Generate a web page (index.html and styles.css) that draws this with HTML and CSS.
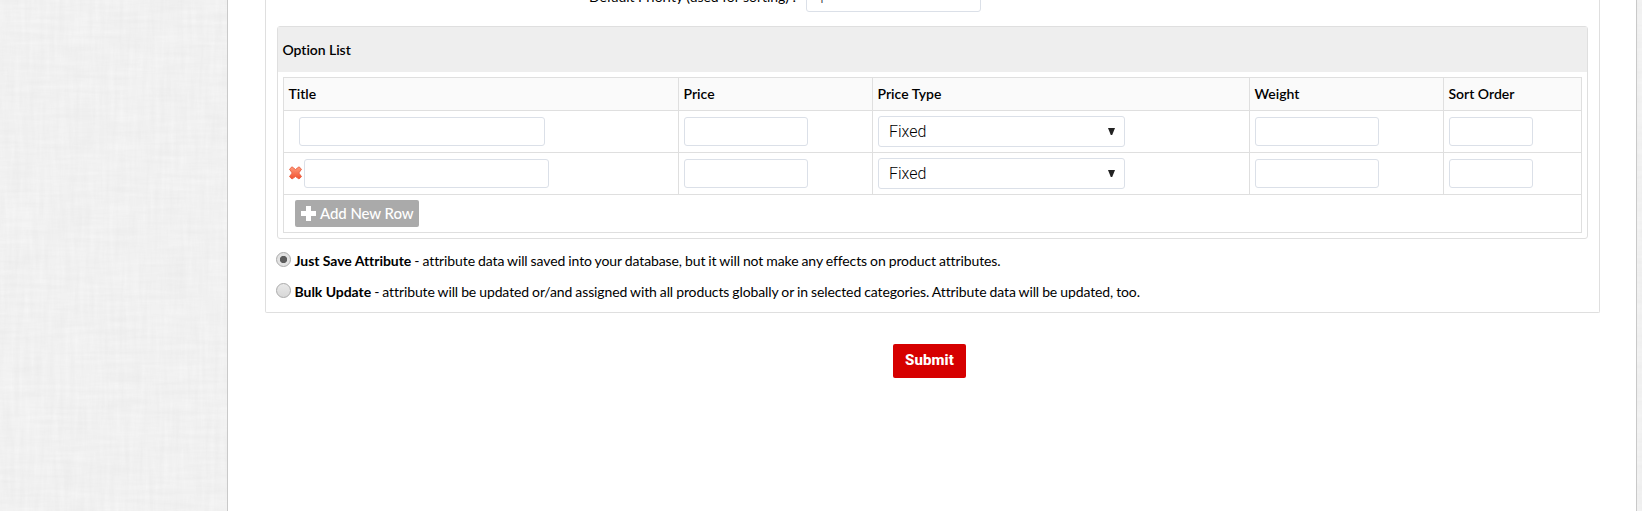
FILE: index.html
```html
<!DOCTYPE html>
<html lang="en">
<head>
<meta charset="utf-8">
<title>Attribute</title>
<link rel="stylesheet" href="styles.css">
</head>
<body>
<svg class="linen" aria-hidden="true">
  <filter id="weft" x="0" y="0" width="100%" height="100%" color-interpolation-filters="sRGB">
    <feTurbulence type="fractalNoise" baseFrequency="0.02 0.2" numOctaves="3" seed="4"/>
    <feColorMatrix values="0 0 0 0 0.86  0 0 0 0 0.86  0 0 0 0 0.86  0.32 0 0 0 -0.05"/>
  </filter>
  <filter id="warp" x="0" y="0" width="100%" height="100%" color-interpolation-filters="sRGB">
    <feTurbulence type="fractalNoise" baseFrequency="0.2 0.02" numOctaves="3" seed="9"/>
    <feColorMatrix values="0 0 0 0 0.86  0 0 0 0 0.86  0 0 0 0 0.86  0.32 0 0 0 -0.05"/>
  </filter>
  <rect width="100%" height="100%" filter="url(#weft)"/>
  <rect width="100%" height="100%" filter="url(#warp)"/>
</svg>
<main class="page">
  <section class="fieldset">
    <div class="priority">
      <label class="priority-label">Default Priority (used for sorting) :</label>
      <div class="field priority-field">1</div>
    </div>
    <div class="panel">
      <h2 class="panel-title">Option List</h2>
      <div class="table">
        <div class="row head">
          <div class="cell">Title</div><div class="cell">Price</div><div class="cell">Price Type</div><div class="cell">Weight</div><div class="cell">Sort Order</div>
        </div>
        <div class="row">
          <div class="cell"><div class="field title-first"></div></div>
          <div class="cell"><div class="field medium"></div></div>
          <div class="cell"><div class="field select"><span>Fixed</span><svg width="7" height="7" viewBox="0 0 7 7"><path d="M0 0h7L4.2 7H2.8z" fill="#222"/></svg></div></div>
          <div class="cell"><div class="field medium"></div></div>
          <div class="cell"><div class="field small"></div></div>
        </div>
        <div class="row">
          <div class="cell">
            <svg class="remove" width="13" height="14" viewBox="0 0 13 14"><defs><linearGradient id="red" x1="0" y1="0" x2="0" y2="1"><stop offset="0" stop-color="#ff9c7c"/><stop offset="1" stop-color="#f2502e"/></linearGradient></defs><path d="M3 .8 6.500 3.500 10 .8 12.500 3.200 9.800 7 12.500 10.600 10 13 6.500 10.500 3 13 .5 10.600 3.200 7 .5 3.200z" fill="url(#red)" stroke="#ea5f42" stroke-width=".9" stroke-linejoin="round"/></svg>
            <div class="field title-next"></div>
          </div>
          <div class="cell"><div class="field medium"></div></div>
          <div class="cell"><div class="field select"><span>Fixed</span><svg width="7" height="7" viewBox="0 0 7 7"><path d="M0 0h7L4.2 7H2.8z" fill="#222"/></svg></div></div>
          <div class="cell"><div class="field medium"></div></div>
          <div class="cell"><div class="field small"></div></div>
        </div>
        <div class="foot">
          <button class="add"><svg width="15" height="15" viewBox="0 0 15 15"><path d="M5 0h5v5h5v5h-5v5H5v-5H0V5h5z" fill="#fff"/></svg><span>Add New Row</span></button>
        </div>
      </div>
    </div>
    <div class="choice"><span class="radio checked"></span><span><b>Just Save Attribute</b> - attribute data will saved into your database, but it will not make any effects on product attributes.</span></div>
    <div class="choice"><span class="radio"></span><span><b>Bulk Update</b> - attribute will be updated or/and assigned with all products globally or in selected categories. Attribute data will be updated, too.</span></div>
  </section>
  <button class="submit">Submit</button>
</main>
</body>
</html>
```
FILE: styles.css
```css
* { box-sizing: border-box; }
html { height: 100%; overflow: hidden; }
body {
  margin: 0;
  height: 511px;
  overflow: hidden;
  background: #f6f6f6;
  color: #000;
  font: 14px/20px Lato, sans-serif;
  font-variant-ligatures: none;
}
.linen { position: absolute; inset: 0; width: 100%; height: 100%; z-index: -1; }
.page {
  width: 1410px;
  height: 511px;
  margin-left: 227px;
  padding: 0 36px 0 37px;
  background: #fff;
  border: solid #c9c9c9;
  border-width: 0 1px;
  display: flex;
  flex-direction: column;
  align-items: center;
}
.fieldset {
  width: 1335px;
  height: 313px;
  border: 1px solid #dfdfdf;
  border-top: 0;
  border-radius: 0 0 2px 2px;
  padding: 0 11px;
}
.priority { height: 26px; display: flex; align-items: flex-start; }
.priority-label { width: 519px; margin-top: -13px; text-align: right; letter-spacing: -0.04px; }
.field {
  height: 29px;
  background: #fff;
  border: 1px solid #dbe0e8;
  border-radius: 3px;
}
.priority-field {
  width: 175px;
  margin: -17px 0 0 10px;
  padding: 0 10px;
  font: 300 16px/27px Roboto, sans-serif;
  color: #333;
}
.panel { height: 213px; border: 1px solid #dfdfdf; border-radius: 3px; }
.panel-title {
  height: 45px;
  margin: 0;
  padding: 0 4.5px;
  background: #eee;
  font-size: 14px;
  font-weight: 600;
  line-height: 46px;
  letter-spacing: -0.05px;
}
.table { margin: 5px; border: 1px solid #dfdfdf; height: 156px; }
.row {
  display: grid;
  grid-template-columns: 395px 194px 377px 194px 1fr;
  height: 42px;
  border-bottom: 1px solid #dfdfdf;
}
.head { height: 33px; background: #fafafa; font-weight: 600; }
.cell { display: flex; align-items: center; padding: 0 5px; border-right: 1px solid #dfdfdf; }
.head .cell { padding-left: 4.5px; }
.cell:last-child { border-right: 0; }
.remove { flex: none; margin: 0 0 2px -0.5px; }
.title-first { width: 246px; margin-left: 10px; }
.title-next { width: 245px; margin-left: 2.5px; }
.medium { width: 124px; }
.small { width: 84px; }
.select {
  width: 247px;
  height: 31px;
  padding: 0 9px 0 10px;
  display: flex;
  align-items: center;
  justify-content: space-between;
  font: 300 16px/29px Roboto, sans-serif;
  color: #000;
}
.foot { padding: 5px 11px; }
.add {
  width: 124px;
  height: 27px;
  padding: 0 0 0 6px;
  border: 0;
  border-radius: 2px;
  background: #aaa;
  color: #fff;
  display: flex;
  align-items: center;
  gap: 4px;
  font: 500 15px/26px Lato, sans-serif;
  letter-spacing: -0.08px;
  white-space: nowrap;
}
.add svg { flex: none; }
.add span { padding-bottom: 1px; }
.choice {
  display: flex;
  gap: 3.5px;
  height: 20px;
  margin: 12px 0 0 -1px;
  white-space: nowrap;
  letter-spacing: -0.11px;
  word-spacing: -0.4px;
}
.choice + .choice { margin-top: 11px; }
.choice b { font-weight: 700; letter-spacing: -0.04px; word-spacing: 0; }
.radio {
  width: 15px;
  height: 15px;
  margin-top: 1px;
  border: 1px solid #aaa;
  border-radius: 50%;
  background: linear-gradient(#e9e9e9, #d8d8d8);
}
.checked { background: radial-gradient(circle, #5c5c5c 3.300px, #e2e2e2 4px); }
.submit {
  width: 73px;
  height: 34px;
  margin: 31px 6px 0 0;
  padding: 0 0 2px;
  border: 0;
  border-radius: 2px;
  background: #d60000;
  color: #fff;
  font: 800 15px/32px Roboto, sans-serif;
  letter-spacing: 0.1px;
}
```
